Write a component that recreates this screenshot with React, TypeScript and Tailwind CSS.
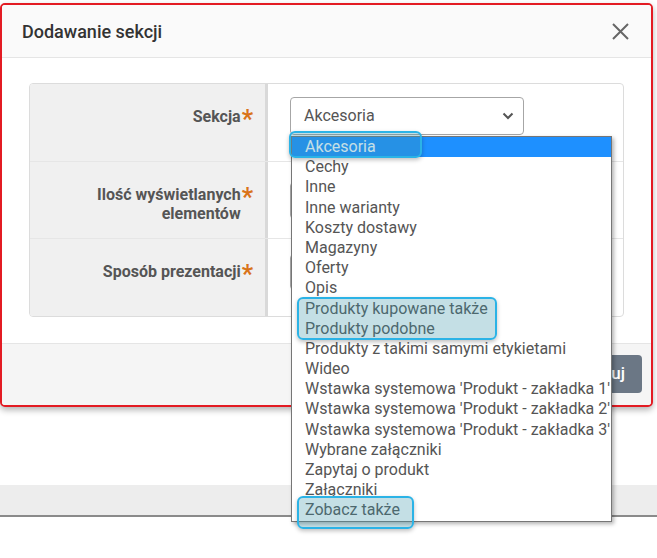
import React from "react";

const options = [
  "Akcesoria",
  "Cechy",
  "Inne",
  "Inne warianty",
  "Koszty dostawy",
  "Magazyny",
  "Oferty",
  "Opis",
  "Produkty kupowane także",
  "Produkty podobne",
  "Produkty z takimi samymi etykietami",
  "Wideo",
  "Wstawka systemowa 'Produkt - zakładka 1'",
  "Wstawka systemowa 'Produkt - zakładka 2'",
  "Wstawka systemowa 'Produkt - zakładka 3'",
  "Wybrane załączniki",
  "Zapytaj o produkt",
  "Załączniki",
  "Zobacz także",
];

function Label({ children }: { children: React.ReactNode }) {
  return (
    <div className="flex w-[238px] shrink-0 justify-end border-r-[3px] border-[#d9d9d9] bg-[#f0f0f0] pl-[20px] pr-[12px] pt-[23px]">
      <div className="text-right text-[16px] font-bold leading-[19px] text-[#555]">{children}</div>
      <span className="ml-[1px] h-[19px] text-[25px] font-bold leading-[25px] text-[#d9731a]">*</span>
    </div>
  );
}

function Row({ label, first, last, children }: { label: React.ReactNode; first?: boolean; last?: boolean; children: React.ReactNode }) {
  return (
    <div className={`flex ${last ? "h-[78px]" : "h-[77px]"} ${first ? "" : "border-t border-[#e6e6e6]"}`}>
      <Label>{label}</Label>
      <div className="flex-1 pl-[22px]">{children}</div>
    </div>
  );
}

export default function App() {
  return (
    <div className="relative h-[558px] w-[657px] overflow-hidden bg-white font-['Roboto',sans-serif]">
      <div className="mt-[3px] flex h-[404px] w-[653px] flex-col overflow-hidden rounded-[5px] border-2 border-[#e31b23] bg-white shadow-[0_3px_6px_rgba(0,0,0,0.3)]">
        <div className="flex h-[53px] shrink-0 items-center justify-between border-b border-[#e5e5e5] bg-[#fafafa] pl-[20px] pr-[22px]">
          <h2 className="text-[18px] font-medium text-[#333]">Dodawanie sekcji</h2>
          <svg width="17" height="17" viewBox="0 0 17 17" className="mt-[1px]">
            <path d="M1 1L16 16M16 1L1 16" stroke="#666" strokeWidth="2" />
          </svg>
        </div>

        <div className="shrink-0 px-[27px] pb-[26px] pt-[25px]">
          <div className="overflow-hidden rounded-[4px] border border-[#dcdcdc]">
            <Row first label="Sekcja">
              <div className="mt-[13px] flex h-[38px] w-[234px] items-center justify-between rounded-[4px] border border-[#a6a6a6] bg-white pl-[13px] pr-[9px] text-[16px] text-[#555]">
                <span>Akcesoria</span>
                <svg width="12" height="8" viewBox="0 0 12 8">
                  <path d="M1.5 1.5L6 6L10.5 1.5" fill="none" stroke="#555" strokeWidth="2" />
                </svg>
              </div>
            </Row>
            <Row label="Ilość wyświetlanych elementów">
              <div className="mt-[20px] h-[37px] w-[234px] rounded-[4px] border border-[#a6a6a6] bg-white" />
            </Row>
            <Row last label="Sposób prezentacji">
              <div className="mt-[15px] h-[36px] w-[234px] rounded-[4px] border border-[#a6a6a6] bg-white" />
            </Row>
          </div>
        </div>

        <div className="flex flex-1 items-start justify-end border-t border-[#e5e5e5] bg-[#f5f5f5] pr-[9px] pt-[11px]">
          <button className="h-[38px] rounded-[4px] bg-[#6b7785] pl-[20px] pr-[17px] text-[17px] font-medium text-white">
            Zastosuj
          </button>
        </div>
      </div>

      <div className="h-[78px]" />
      <div className="h-[32px] border-b-2 border-[#8a8a8a] bg-[#ededed]" />

      <div className="absolute left-[291px] top-[136px] w-[321px] border border-[#767676] bg-white shadow-[2px_2px_4px_rgba(0,0,0,0.3)]">
        {options.map((o, i) => (
          <div
            key={o}
            className={`h-[20.2px] overflow-hidden whitespace-nowrap pl-[13px] text-[16px] leading-[20.2px] ${
              i === 0 ? "bg-[#1e90ff] text-white" : "text-[#555]"
            }`}
          >
            {o}
          </div>
        ))}
      </div>

      <div className="absolute left-[289px] top-[131px] h-[27px] w-[133px] rounded-[6px] border-2 border-[#2bb3e6] bg-[rgba(60,150,170,0.3)] shadow-[0_2px_4px_rgba(0,0,0,0.25)]" />
      <div className="absolute left-[297px] top-[297px] h-[43px] w-[200px] rounded-[6px] border-2 border-[#2bb3e6] bg-[rgba(60,150,170,0.3)] shadow-[0_2px_4px_rgba(0,0,0,0.25)]" />
      <div className="absolute left-[297px] top-[496px] h-[33px] w-[117px] rounded-[6px] border-2 border-[#2bb3e6] bg-[rgba(60,150,170,0.3)] shadow-[0_2px_4px_rgba(0,0,0,0.25)]" />
    </div>
  );
}
